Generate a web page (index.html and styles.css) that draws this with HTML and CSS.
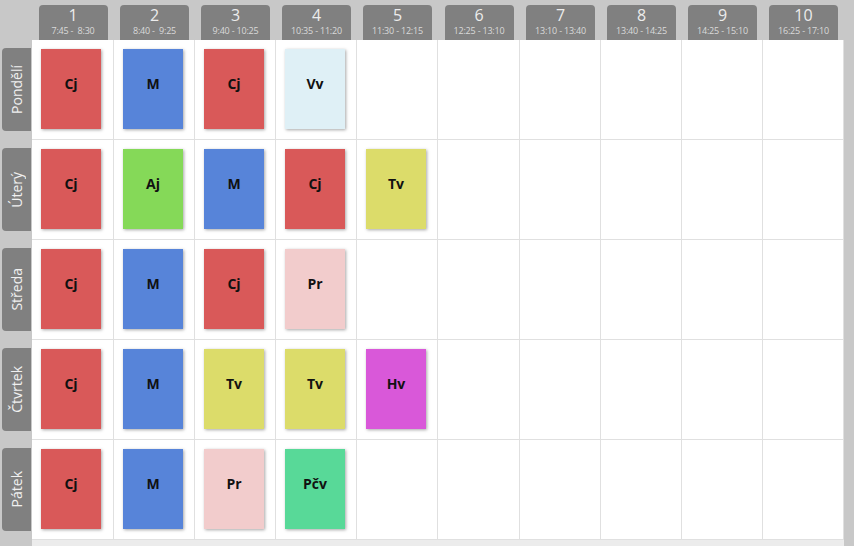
FILE: index.html
```html
<!DOCTYPE html>
<html lang="cs">
<head>
<meta charset="utf-8">
<title>Rozvrh</title>
<link rel="stylesheet" href="styles.css">
</head>
<body>
<div class="timetable">
  <div class="corner"></div>
  <div class="hcell"><div class="tab"><span class="num">1</span><span class="time">7:45 -  8:30</span></div></div>
  <div class="hcell"><div class="tab"><span class="num">2</span><span class="time">8:40 -  9:25</span></div></div>
  <div class="hcell"><div class="tab"><span class="num">3</span><span class="time">9:40 - 10:25</span></div></div>
  <div class="hcell"><div class="tab"><span class="num">4</span><span class="time">10:35 - 11:20</span></div></div>
  <div class="hcell"><div class="tab"><span class="num">5</span><span class="time">11:30 - 12:15</span></div></div>
  <div class="hcell"><div class="tab"><span class="num">6</span><span class="time">12:25 - 13:10</span></div></div>
  <div class="hcell"><div class="tab"><span class="num">7</span><span class="time">13:10 - 13:40</span></div></div>
  <div class="hcell"><div class="tab"><span class="num">8</span><span class="time">13:40 - 14:25</span></div></div>
  <div class="hcell"><div class="tab"><span class="num">9</span><span class="time">14:25 - 15:10</span></div></div>
  <div class="hcell"><div class="tab"><span class="num">10</span><span class="time">16:25 - 17:10</span></div></div>

  <div class="dcell"><div class="day"><span>Pondělí</span></div></div>
  <div class="cell"><div class="card red">Cj</div></div>
  <div class="cell"><div class="card blue">M</div></div>
  <div class="cell"><div class="card red">Cj</div></div>
  <div class="cell"><div class="card lblue">Vv</div></div>
  <div class="cell"></div><div class="cell"></div><div class="cell"></div><div class="cell"></div><div class="cell"></div><div class="cell"></div>

  <div class="dcell"><div class="day"><span>Úterý</span></div></div>
  <div class="cell"><div class="card red">Cj</div></div>
  <div class="cell"><div class="card green">Aj</div></div>
  <div class="cell"><div class="card blue">M</div></div>
  <div class="cell"><div class="card red">Cj</div></div>
  <div class="cell"><div class="card yellow">Tv</div></div>
  <div class="cell"></div><div class="cell"></div><div class="cell"></div><div class="cell"></div><div class="cell"></div>

  <div class="dcell"><div class="day"><span>Středa</span></div></div>
  <div class="cell"><div class="card red">Cj</div></div>
  <div class="cell"><div class="card blue">M</div></div>
  <div class="cell"><div class="card red">Cj</div></div>
  <div class="cell"><div class="card pink">Pr</div></div>
  <div class="cell"></div><div class="cell"></div><div class="cell"></div><div class="cell"></div><div class="cell"></div><div class="cell"></div>

  <div class="dcell"><div class="day"><span>Čtvrtek</span></div></div>
  <div class="cell"><div class="card red">Cj</div></div>
  <div class="cell"><div class="card blue">M</div></div>
  <div class="cell"><div class="card yellow">Tv</div></div>
  <div class="cell"><div class="card yellow">Tv</div></div>
  <div class="cell"><div class="card magenta">Hv</div></div>
  <div class="cell"></div><div class="cell"></div><div class="cell"></div><div class="cell"></div><div class="cell"></div>

  <div class="dcell"><div class="day"><span>Pátek</span></div></div>
  <div class="cell"><div class="card red">Cj</div></div>
  <div class="cell"><div class="card blue">M</div></div>
  <div class="cell"><div class="card pink">Pr</div></div>
  <div class="cell"><div class="card teal">Pčv</div></div>
  <div class="cell"></div><div class="cell"></div><div class="cell"></div><div class="cell"></div><div class="cell"></div><div class="cell"></div>

  <div class="dcell foot-corner"></div>
  <div class="footer"></div>
</div>
</body>
</html>
```

FILE: styles.css
```css
html, body {
  margin: 0;
  padding: 0;
  background: #c8c8c8;
  height: 100%;
  overflow: hidden;
}
body {
  font-family: "Open Sans", "Noto Sans", "DejaVu Sans", sans-serif;
}
.timetable {
  display: grid;
  grid-template-columns: 32px 82px repeat(4, 81px) 82px repeat(4, 81px);
  grid-template-rows: 40px repeat(5, 100px) 6px;
  width: 844px;
}
.hcell {
  display: flex;
  justify-content: center;
  align-items: flex-end;
  padding-top: 5px;
}
.tab {
  width: 69px;
  height: 35px;
  background: #808080;
  border-radius: 4px 4px 0 0;
  display: flex;
  flex-direction: column;
  align-items: center;
}
.num {
  font-size: 16px;
  line-height: 14px;
  margin-top: 3px;
  color: #ececec;
}
.time {
  font-size: 9px;
  line-height: 9px;
  margin-top: 4px;
  white-space: pre;
  letter-spacing: -0.2px;
  color: #dadada;
}
.dcell {
  padding: 8px 0 8px 2px;
}
.day {
  height: 83px;
  width: 29px;
  background: #808080;
  border-radius: 4px 0 0 4px;
  display: flex;
  align-items: center;
  justify-content: center;
}
.day span {
  writing-mode: vertical-rl;
  transform: rotate(180deg);
  color: #f0f0f0;
  font-size: 14px;
  white-space: nowrap;
}
.cell {
  background: #fff;
  border-right: 1px solid #e0e0e0;
  border-bottom: 1px solid #e0e0e0;
  display: flex;
  align-items: flex-start;
  justify-content: flex-start;
  padding: 9px 0 0 9px;
  box-sizing: border-box;
}
.card {
  width: 60px;
  height: 80px;
  box-sizing: border-box;
  padding-bottom: 12px;
  display: flex;
  align-items: center;
  justify-content: center;
  font-weight: bold;
  font-size: 14px;
  color: #111;
  box-shadow: 1px 1px 3px rgba(0, 0, 0, 0.35);
}
.red { background: #d95959; }
.blue { background: #5784d9; }
.green { background: #85d958; }
.lblue { background: #dff0f6; }
.yellow { background: #dcdc6a; }
.pink { background: #f2cccc; }
.magenta { background: #d958d9; }
.teal { background: #58d998; }
.foot-corner { padding: 0; }
.footer {
  grid-column: 2 / span 10;
  background: #ececec;
}
```
